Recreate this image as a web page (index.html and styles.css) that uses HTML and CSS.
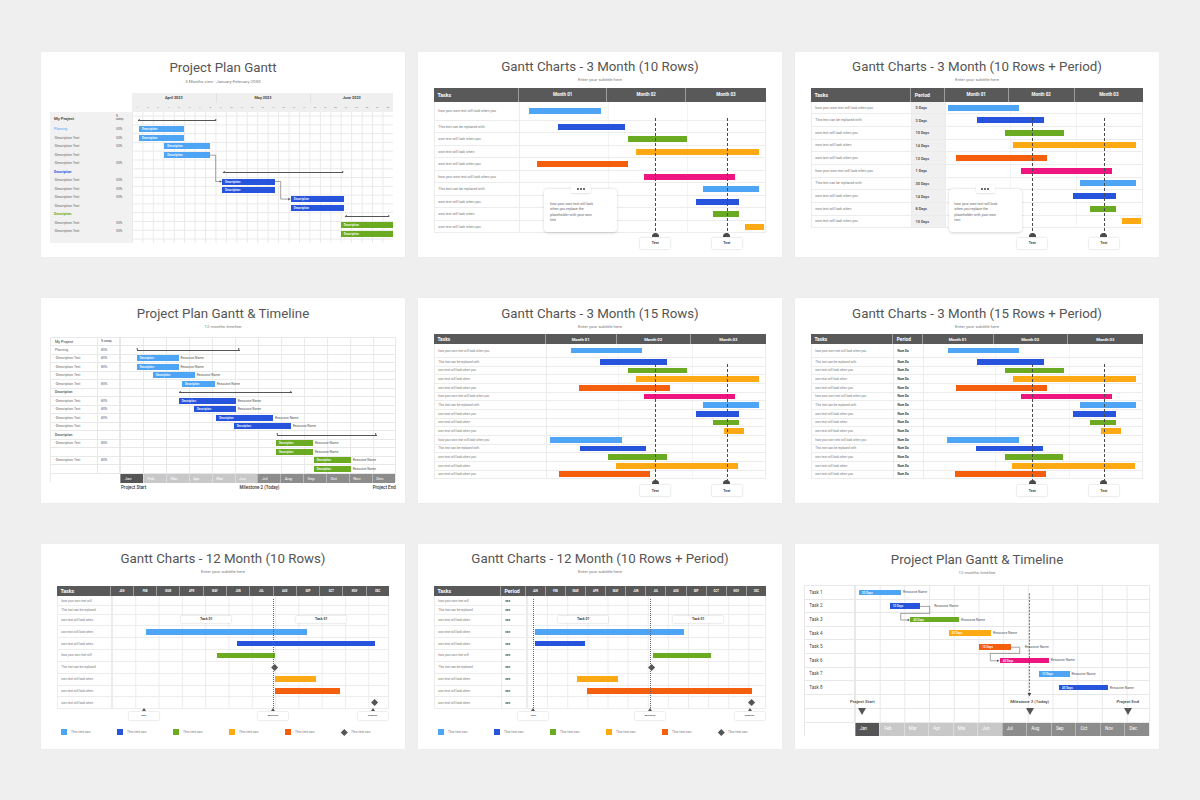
FILE: index.html
```html
<!DOCTYPE html>
<html lang="en">
<head>
<meta charset="utf-8">
<title>Gantt Chart Templates</title>
<link rel="stylesheet" href="styles.css">
</head>
<body>
<main class="sheet">

<!-- 1 -->
<section class="slide s1">
  <h1 class="title">Project Plan Gantt</h1>
  <p class="sub">3 Months view - January-February 20XX</p>
  <div class="pg">
    <div></div>
    <div class="pg-head">
      <div class="pg-months"><span>April 2023</span><span>May 2023</span><span>June 2023</span></div>
      <div class="pg-days"><span>1</span><span>2</span><span>3</span><span>4</span><span>5</span><span>6</span><span>7</span><span>8</span><span>9</span><span>10</span><span>11</span><span>12</span><span>13</span><span>14</span><span>15</span><span>16</span><span>17</span><span>18</span><span>19</span><span>20</span><span>21</span><span>22</span><span>23</span><span>24</span><span>25</span></div>
    </div>
    <div class="pg-left">
      <div class="pl-head"><b>My Project</b><small>%<br>comp.</small></div>
      <div class="pl-row"><span class="lb-t">Planning</span><span>50%</span></div>
      <div class="pl-row"><span>-Description Text</span><span>50%</span></div>
      <div class="pl-row"><span>-Description Text</span><span>50%</span></div>
      <div class="pl-row"><span>-Description Text</span><span></span></div>
      <div class="pl-row"><span>-Description Text</span><span>50%</span></div>
      <div class="pl-row"><span class="bl-t">Description</span><span></span></div>
      <div class="pl-row"><span>-Description Text</span><span>50%</span></div>
      <div class="pl-row"><span>-Description Text</span><span>50%</span></div>
      <div class="pl-row"><span>-Description Text</span><span>50%</span></div>
      <div class="pl-row"><span>-Description Text</span><span></span></div>
      <div class="pl-row"><span class="gr-t">Description</span><span></span></div>
      <div class="pl-row"><span>-Description Text</span><span>50%</span></div>
      <div class="pl-row"><span>-Description Text</span><span>50%</span></div>
    </div>
    <div class="pg-body">
      <div class="pb-row"><i class="span" style="margin-left:6px;width:78px"></i></div>
      <div class="pb-row"><i class="bar c1" style="margin-left:7px;width:45.3px">Description</i></div>
      <div class="pb-row"><i class="bar c1" style="margin-left:7px;width:45.3px">Description</i></div>
      <div class="pb-row"><i class="bar c1" style="margin-left:32.3px;width:45.4px">Description</i></div>
      <div class="pb-row"><i class="bar c1" style="margin-left:32.3px;width:45.4px">Description</i></div>
      <div class="pb-row"></div>
      <div class="pb-row"><i class="span" style="margin-left:91px;width:120px"></i></div>
      <div class="pb-row"><i class="bar c2" style="margin-left:90px;width:52.7px">Description</i></div>
      <div class="pb-row"><i class="bar c2" style="margin-left:90px;width:52.7px">Description</i></div>
      <div class="pb-row"><i class="bar c2" style="margin-left:158.7px;width:53.3px">Description</i></div>
      <div class="pb-row"><i class="bar c2" style="margin-left:158.7px;width:53.3px">Description</i></div>
      <div class="pb-row"><i class="span" style="margin-left:213px;width:44px"></i></div>
      <div class="pb-row"><i class="bar c3" style="margin-left:208.7px;width:52.3px">Description</i></div>
      <div class="pb-row"><i class="bar c3" style="margin-left:208.7px;width:52.3px">Description</i></div>
      <svg class="conn" width="261" height="131" viewBox="0 0 261 131">
        <polyline points="77.7,43.2 83.7,43.2 83.7,69.5 88.3,69.5" fill="none" stroke="#666" stroke-width="0.6"/>
        <polygon points="90,69.5 87.6,68.2 87.6,70.8" fill="#555"/>
        <polyline points="142.7,69.5 148.7,69.5 148.7,87.1 157,87.1" fill="none" stroke="#666" stroke-width="0.6"/>
        <polygon points="158.7,87.1 156.3,85.8 156.3,88.4" fill="#555"/>
      </svg>
    </div>
  </div>
</section>

<!-- 2 -->
<section class="slide s2">
  <h1 class="title">Gantt Charts - 3 Month (10 Rows)</h1>
  <p class="sub">Enter your subtitle here</p>
  <div class="tbl t2">
    <div class="thead"><span class="lh">Tasks</span><span>Month 01</span><span>Month 02</span><span>Month 03</span></div>
    <div class="trow first"><span>how your own text will look when you</span><div class="ch"><i class="bar c1" style="margin-left:9px;width:72px"></i></div></div>
    <div class="trow"><span>This text can be replaced with</span><div class="ch"><i class="bar c2" style="margin-left:38.3px;width:66.7px"></i></div></div>
    <div class="trow"><span>own text will look when you</span><div class="ch"><i class="bar c3" style="margin-left:108.3px;width:58.7px"></i></div></div>
    <div class="trow"><span>own text will look when</span><div class="ch"><i class="bar c4" style="margin-left:115.6px;width:123.1px"></i></div></div>
    <div class="trow"><span>own text will look when you</span><div class="ch"><i class="bar c5" style="margin-left:17.3px;width:91px"></i></div></div>
    <div class="trow"><span>how your own text will look when you</span><div class="ch"><i class="bar c6" style="margin-left:124.3px;width:91px"></i></div></div>
    <div class="trow"><span>This text can be replaced with</span><div class="ch"><i class="bar c1" style="margin-left:182.6px;width:56.1px"></i></div></div>
    <div class="trow"><span>own text will look when you</span><div class="ch"><i class="bar c2" style="margin-left:176.3px;width:43px"></i></div></div>
    <div class="trow"><span>own text will look when</span><div class="ch"><i class="bar c3" style="margin-left:192.7px;width:26.6px"></i></div></div>
    <div class="trow"><span>own text will look when you</span><div class="ch"><i class="bar c4" style="margin-left:224.7px;width:19.3px"></i></div></div>
    <div class="vl" style="left:221.3px;top:30px;height:116px"></div>
    <div class="vl" style="left:292.7px;top:30px;height:116px"></div>
    <div class="dome" style="left:217.6px;top:145.3px"></div>
    <div class="dome" style="left:289px;top:145.3px"></div>
    <div class="tag big" style="left:206.3px;top:150px">Text</div>
    <div class="tag big" style="left:277.7px;top:150px">Text</div>
    <div class="callout" style="left:110.3px;top:101.6px"><div class="dots"><i></i><i></i><i></i></div>how your own text will look<br>when you replace the<br>placeholder with your own<br>text</div>
  </div>
</section>

<!-- 3 -->
<section class="slide s3">
  <h1 class="title">Gantt Charts - 3 Month (10 Rows + Period)</h1>
  <p class="sub">Enter your subtitle here</p>
  <div class="tbl t3">
    <div class="thead"><span class="lh">Tasks</span><span class="lh">Period</span><span>Month 01</span><span>Month 02</span><span>Month 03</span></div>
    <div class="trow"><span>how your own text will look when you</span><span class="pd">5 Days</span><div class="ch"><i class="bar c1" style="margin-left:1.9px;width:71.7px"></i></div></div>
    <div class="trow"><span>This text can be replaced with</span><span class="pd">3 Days</span><div class="ch"><i class="bar c2" style="margin-left:31.3px;width:66.7px"></i></div></div>
    <div class="trow"><span>own text will look when you</span><span class="pd">10 Days</span><div class="ch"><i class="bar c3" style="margin-left:59.6px;width:58.7px"></i></div></div>
    <div class="trow"><span>own text will look when</span><span class="pd">14 Days</span><div class="ch"><i class="bar c4" style="margin-left:66.9px;width:123.1px"></i></div></div>
    <div class="trow"><span>own text will look when you</span><span class="pd">12 Days</span><div class="ch"><i class="bar c5" style="margin-left:10.3px;width:91px"></i></div></div>
    <div class="trow"><span>how your own text will look when you</span><span class="pd">1 Days</span><div class="ch"><i class="bar c6" style="margin-left:75.6px;width:91px"></i></div></div>
    <div class="trow"><span>This text can be replaced with</span><span class="pd">30 Days</span><div class="ch"><i class="bar c1" style="margin-left:133.9px;width:56.1px"></i></div></div>
    <div class="trow"><span>own text will look when you</span><span class="pd">14 Days</span><div class="ch"><i class="bar c2" style="margin-left:127.6px;width:43px"></i></div></div>
    <div class="trow"><span>own text will look when</span><span class="pd">8 Days</span><div class="ch"><i class="bar c3" style="margin-left:144px;width:26.6px"></i></div></div>
    <div class="trow"><span>own text will look when you</span><span class="pd">10 Days</span><div class="ch"><i class="bar c4" style="margin-left:176px;width:19.3px"></i></div></div>
    <div class="vl" style="left:221.3px;top:30px;height:116px"></div>
    <div class="vl" style="left:292.7px;top:30px;height:116px"></div>
    <div class="dome" style="left:217.6px;top:145.3px"></div>
    <div class="dome" style="left:289px;top:145.3px"></div>
    <div class="tag big" style="left:206.3px;top:150px">Text</div>
    <div class="tag big" style="left:277.7px;top:150px">Text</div>
    <div class="callout" style="left:137.6px;top:101.6px"><div class="dots"><i></i><i></i><i></i></div>how your own text will look<br>when you replace the<br>placeholder with your own<br>text</div>
  </div>
</section>

<!-- 4 -->
<section class="slide s4">
  <h1 class="title">Project Plan Gantt &amp; Timeline</h1>
  <p class="sub">12 months timeline</p>
  <div class="tl">
    <div class="tl-row tl-h"><span>My Project</span><span>% comp.</span><div class="tl-ch"></div></div>
    <div class="tl-row"><span class="lb-t">Planning</span><span>80%</span><div class="tl-ch"><i class="span" style="margin-left:16.7px;width:102.7px"></i></div></div>
    <div class="tl-row"><span>-Description Text</span><span>80%</span><div class="tl-ch"><i class="bar c1" style="margin-left:16.4px;width:42px">Description</i><em class="rn">Resource Name</em></div></div>
    <div class="tl-row"><span>-Description Text</span><span>80%</span><div class="tl-ch"><i class="bar c1" style="margin-left:16.4px;width:42px">Description</i><em class="rn">Resource Name</em></div></div>
    <div class="tl-row"><span>-Description Text</span><span></span><div class="tl-ch"><i class="bar c1" style="margin-left:32.7px;width:42px">Description</i><em class="rn">Resource Name</em></div></div>
    <div class="tl-row"><span>-Description Text</span><span>80%</span><div class="tl-ch"><i class="bar c1" style="margin-left:61.7px;width:33px">Description</i><em class="rn">Resource Name</em></div></div>
    <div class="tl-row"><span class="bl-t">Description</span><span></span><div class="tl-ch"><i class="span" style="margin-left:59px;width:112.4px"></i></div></div>
    <div class="tl-row"><span>-Description Text</span><span>80%</span><div class="tl-ch"><i class="bar c2" style="margin-left:58.4px;width:57.3px">Description</i><em class="rn">Resource Name</em></div></div>
    <div class="tl-row"><span>-Description Text</span><span>80%</span><div class="tl-ch"><i class="bar c2" style="margin-left:73.7px;width:42px">Description</i><em class="rn">Resource Name</em></div></div>
    <div class="tl-row"><span>-Description Text</span><span>80%</span><div class="tl-ch"><i class="bar c2" style="margin-left:96px;width:57px">Description</i><em class="rn">Resource Name</em></div></div>
    <div class="tl-row"><span>-Description Text</span><span></span><div class="tl-ch"><i class="bar c2" style="margin-left:113.4px;width:57.3px">Description</i><em class="rn">Resource Name</em></div></div>
    <div class="tl-row"><span class="gr-t">Description</span><span></span><div class="tl-ch"><i class="span" style="margin-left:156.4px;width:100.3px"></i></div></div>
    <div class="tl-row"><span>-Description Text</span><span>80%</span><div class="tl-ch"><i class="bar c3" style="margin-left:155.7px;width:37.3px">Description</i><em class="rn">Resource Name</em></div></div>
    <div class="tl-row"><span></span><span></span><div class="tl-ch"><i class="bar c3" style="margin-left:155.7px;width:37.3px">Description</i><em class="rn">Resource Name</em></div></div>
    <div class="tl-row"><span>-Description Text</span><span>80%</span><div class="tl-ch"><i class="bar c3" style="margin-left:193.4px;width:37.3px">Description</i><em class="rn">Resource Name</em></div></div>
    <div class="tl-row"><span></span><span></span><div class="tl-ch"><i class="bar c3" style="margin-left:193.4px;width:37.3px">Description</i><em class="rn">Resource Name</em></div></div>
    <div class="tl-months"><span></span><span class="mj">Jan</span><span class="ml">Feb</span><span class="ml">Mar</span><span class="ml">Apr</span><span class="ml">Mai</span><span class="ml">Jun</span><span class="md">Jul</span><span class="md">Aug</span><span class="md">Sep</span><span class="md">Oct</span><span class="md">Nov</span><span class="md">Dec</span></div>
  </div>
  <div class="tl-foot"><b>Project Start</b><b>Milestone 2 (Today)</b><b>Project End</b></div>
</section>

<!-- 5 -->
<section class="slide s5">
  <h1 class="title">Gantt Charts - 3 Month (15 Rows)</h1>
  <p class="sub">Enter your subtitle here</p>
  <div class="tbl t5">
    <div class="thead"><span class="lh">Tasks</span><span>Month 01</span><span>Month 02</span><span>Month 03</span></div>
    <div class="trow first"><span>how your own text will look when you</span><div class="ch"><i class="bar c1" style="margin-left:23.9px;width:71.7px"></i></div></div>
    <div class="trow"><span>This text can be replaced with</span><div class="ch"><i class="bar c2" style="margin-left:53.3px;width:66.7px"></i></div></div>
    <div class="trow"><span>own text will look when you</span><div class="ch"><i class="bar c3" style="margin-left:81.6px;width:58.7px"></i></div></div>
    <div class="trow"><span>own text will look when</span><div class="ch"><i class="bar c4" style="margin-left:88.9px;width:123.1px"></i></div></div>
    <div class="trow"><span>own text will look when you</span><div class="ch"><i class="bar c5" style="margin-left:32.3px;width:91px"></i></div></div>
    <div class="trow"><span>how your own text will look when you</span><div class="ch"><i class="bar c6" style="margin-left:97.6px;width:91px"></i></div></div>
    <div class="trow"><span>This text can be replaced with</span><div class="ch"><i class="bar c1" style="margin-left:155.9px;width:56.1px"></i></div></div>
    <div class="trow"><span>own text will look when you</span><div class="ch"><i class="bar c2" style="margin-left:149.6px;width:43px"></i></div></div>
    <div class="trow"><span>own text will look when</span><div class="ch"><i class="bar c3" style="margin-left:166px;width:26.6px"></i></div></div>
    <div class="trow"><span>own text will look when you</span><div class="ch"><i class="bar c4" style="margin-left:177.6px;width:19.4px"></i></div></div>
    <div class="trow"><span>how your own text will look when you</span><div class="ch"><i class="bar c1" style="margin-left:3.6px;width:71.7px"></i></div></div>
    <div class="trow"><span>This text can be replaced with</span><div class="ch"><i class="bar c2" style="margin-left:33px;width:66.6px"></i></div></div>
    <div class="trow"><span>own text will look when you</span><div class="ch"><i class="bar c3" style="margin-left:61.6px;width:58.7px"></i></div></div>
    <div class="trow"><span>own text will look when</span><div class="ch"><i class="bar c4" style="margin-left:68.9px;width:122.7px"></i></div></div>
    <div class="trow"><span>own text will look when you</span><div class="ch"><i class="bar c5" style="margin-left:11.9px;width:91.1px"></i></div></div>
    <div class="vl" style="left:221.3px;top:30px;height:116.5px"></div>
    <div class="vl" style="left:292.7px;top:30px;height:116.5px"></div>
    <div class="dome" style="left:217.6px;top:146px"></div>
    <div class="dome" style="left:289px;top:146px"></div>
    <div class="tag big" style="left:206.3px;top:150.7px">Text</div>
    <div class="tag big" style="left:277.7px;top:150.7px">Text</div>
  </div>
</section>

<!-- 6 -->
<section class="slide s6">
  <h1 class="title">Gantt Charts - 3 Month (15 Rows + Period)</h1>
  <p class="sub">Enter your subtitle here</p>
  <div class="tbl t6">
    <div class="thead"><span class="lh">Tasks</span><span class="lh">Period</span><span>Month 01</span><span>Month 02</span><span>Month 03</span></div>
    <div class="trow first"><span>how your own text will look when you</span><span class="pd">Num Da</span><div class="ch"><i class="bar c1" style="margin-left:23.9px;width:71.7px"></i></div></div>
    <div class="trow"><span>This text can be replaced with</span><span class="pd">Num Da</span><div class="ch"><i class="bar c2" style="margin-left:53.3px;width:66.7px"></i></div></div>
    <div class="trow"><span>own text will look when you</span><span class="pd">Num Da</span><div class="ch"><i class="bar c3" style="margin-left:81.6px;width:58.7px"></i></div></div>
    <div class="trow"><span>own text will look when</span><span class="pd">Num Da</span><div class="ch"><i class="bar c4" style="margin-left:88.9px;width:123.1px"></i></div></div>
    <div class="trow"><span>own text will look when you</span><span class="pd">Num Da</span><div class="ch"><i class="bar c5" style="margin-left:32.3px;width:91px"></i></div></div>
    <div class="trow"><span>how your own text will look when you</span><span class="pd">Num Da</span><div class="ch"><i class="bar c6" style="margin-left:97.6px;width:91px"></i></div></div>
    <div class="trow"><span>This text can be replaced with</span><span class="pd">Num Da</span><div class="ch"><i class="bar c1" style="margin-left:155.9px;width:56.1px"></i></div></div>
    <div class="trow"><span>own text will look when you</span><span class="pd">Num Da</span><div class="ch"><i class="bar c2" style="margin-left:149.6px;width:43px"></i></div></div>
    <div class="trow"><span>own text will look when</span><span class="pd">Num Da</span><div class="ch"><i class="bar c3" style="margin-left:166px;width:26.6px"></i></div></div>
    <div class="trow"><span>own text will look when you</span><span class="pd">Num Da</span><div class="ch"><i class="bar c4" style="margin-left:177.6px;width:19.4px"></i></div></div>
    <div class="trow"><span>how your own text will look when you</span><span class="pd">Num Da</span><div class="ch"><i class="bar c1" style="margin-left:23.3px;width:71.7px"></i></div></div>
    <div class="trow"><span>This text can be replaced with</span><span class="pd">Num Da</span><div class="ch"><i class="bar c2" style="margin-left:52.6px;width:66.4px"></i></div></div>
    <div class="trow"><span>own text will look when you</span><span class="pd">Num Da</span><div class="ch"><i class="bar c3" style="margin-left:80.9px;width:58.7px"></i></div></div>
    <div class="trow"><span>own text will look when</span><span class="pd">Num Da</span><div class="ch"><i class="bar c4" style="margin-left:88.3px;width:122.7px"></i></div></div>
    <div class="trow"><span>own text will look when you</span><span class="pd">Num Da</span><div class="ch"><i class="bar c5" style="margin-left:31.6px;width:90.7px"></i></div></div>
    <div class="vl" style="left:221.3px;top:30px;height:116.5px"></div>
    <div class="vl" style="left:292.7px;top:30px;height:116.5px"></div>
    <div class="dome" style="left:217.6px;top:146px"></div>
    <div class="dome" style="left:289px;top:146px"></div>
    <div class="tag big" style="left:206.3px;top:150.7px">Text</div>
    <div class="tag big" style="left:277.7px;top:150.7px">Text</div>
  </div>
</section>

<!-- 7 -->
<section class="slide s7">
  <h1 class="title">Gantt Charts - 12 Month (10 Rows)</h1>
  <p class="sub">Enter your subtitle here</p>
  <div class="tbl m12 t7">
    <div class="thead"><span class="lh">Tasks</span><span>JAN</span><span>FEB</span><span>MAR</span><span>APR</span><span>MAY</span><span>JUN</span><span>JUL</span><span>AUG</span><span>SEP</span><span>OCT</span><span>NOV</span><span>DEC</span></div>
    <div class="trow r1"><span>how your own text will</span><div class="ch"></div></div>
    <div class="trow r2"><span>This text can be replaced</span><div class="ch"></div></div>
    <div class="trow r3"><span>own text will look when</span><div class="ch"></div></div>
    <div class="trow"><span>own text will look when</span><div class="ch"><i class="bar c1" style="margin-left:34px;width:161.7px"></i></div></div>
    <div class="trow"><span>own text will look when</span><div class="ch"><i class="bar c2" style="margin-left:125.7px;width:137.7px"></i></div></div>
    <div class="trow"><span>how your own text will</span><div class="ch"><i class="bar c3" style="margin-left:105px;width:58.4px"></i></div></div>
    <div class="trow"><span>This text can be replaced</span><div class="ch"><i class="dia" style="margin-left:160.9px"></i></div></div>
    <div class="trow"><span>own text will look when</span><div class="ch"><i class="bar c4" style="margin-left:163.4px;width:41.3px"></i></div></div>
    <div class="trow"><span>own text will look when</span><div class="ch"><i class="bar c5" style="margin-left:163.4px;width:65.3px"></i></div></div>
    <div class="trow"><span>own text will look when</span><div class="ch"><i class="dia" style="margin-left:260.5px"></i></div></div>
    <div class="tag task" style="left:124.3px;top:29.4px">Task 01</div>
    <div class="tag task" style="left:239.3px;top:29.4px">Task 01</div>
    <div class="vd" style="left:86.6px;top:12.4px;height:109.3px"></div>
    <div class="vd" style="left:216px;top:12.4px;height:109.3px"></div>
    <div class="vd" style="left:315.6px;top:12.4px;height:109.3px"></div>
    <div class="tri-up" style="left:84.6px;top:121.7px"></div>
    <div class="tri-up" style="left:214px;top:121.7px"></div>
    <div class="tri-up" style="left:313.6px;top:121.7px"></div>
    <div class="tag sm" style="left:71.6px;top:125.7px">Start</div>
    <div class="tag sm" style="left:201px;top:125.7px">Milestone</div>
    <div class="tag sm" style="left:300.6px;top:125.7px">Deadline</div>
  </div>
  <div class="legend">
    <span><i class="c1"></i>This text can</span>
    <span><i class="c2"></i>This text can</span>
    <span><i class="c3"></i>This text can</span>
    <span><i class="c4"></i>This text can</span>
    <span><i class="c5"></i>This text can</span>
    <span><i class="dia"></i>This text can</span>
  </div>
</section>

<!-- 8 -->
<section class="slide s8">
  <h1 class="title">Gantt Charts - 12 Month (10 Rows + Period)</h1>
  <p class="sub">Enter your subtitle here</p>
  <div class="tbl m12 t8">
    <div class="thead"><span class="lh">Tasks</span><span class="lh">Period</span><span>JAN</span><span>FEB</span><span>MAR</span><span>APR</span><span>MAY</span><span>JUN</span><span>JUL</span><span>AUG</span><span>SEP</span><span>OCT</span><span>NOV</span><span>DEC</span></div>
    <div class="trow r1"><span>how your own text will</span><span class="pd">xxx</span><div class="ch"></div></div>
    <div class="trow r2"><span>This text can be replaced</span><span class="pd">xxx</span><div class="ch"></div></div>
    <div class="trow r3"><span>own text will look when</span><span class="pd">xxx</span><div class="ch"></div></div>
    <div class="trow"><span>own text will look when</span><span class="pd">xxx</span><div class="ch"><i class="bar c1" style="margin-left:8.6px;width:149px"></i></div></div>
    <div class="trow"><span>own text will look when</span><span class="pd">xxx</span><div class="ch"><i class="bar c2" style="margin-left:8.6px;width:49.4px"></i></div></div>
    <div class="trow"><span>how your own text will</span><span class="pd">xxx</span><div class="ch"><i class="bar c3" style="margin-left:126px;width:58.6px"></i></div></div>
    <div class="trow"><span>This text can be replaced</span><span class="pd">xxx</span><div class="ch"><i class="dia" style="margin-left:122.8px"></i></div></div>
    <div class="trow"><span>own text will look when</span><span class="pd">xxx</span><div class="ch"><i class="bar c4" style="margin-left:50.3px;width:41px"></i></div></div>
    <div class="trow"><span>own text will look when</span><span class="pd">xxx</span><div class="ch"><i class="bar c5" style="margin-left:60.3px;width:164.7px"></i></div></div>
    <div class="trow"><span>own text will look when</span><span class="pd">xxx</span><div class="ch"><i class="dia" style="margin-left:222.5px"></i></div></div>
    <div class="tag task" style="left:124.3px;top:29.4px">Task 01</div>
    <div class="tag task" style="left:239.3px;top:29.4px">Task 01</div>
    <div class="vd" style="left:99.3px;top:12.4px;height:109.3px"></div>
    <div class="vd" style="left:216px;top:12.4px;height:109.3px"></div>
    <div class="vd" style="left:315.7px;top:12.4px;height:109.3px"></div>
    <div class="tri-up" style="left:97.3px;top:121.7px"></div>
    <div class="tri-up" style="left:214px;top:121.7px"></div>
    <div class="tri-up" style="left:313.7px;top:121.7px"></div>
    <div class="tag sm" style="left:84.3px;top:125.7px">Start</div>
    <div class="tag sm" style="left:201px;top:125.7px">Milestone</div>
    <div class="tag sm" style="left:300.7px;top:125.7px">Deadline</div>
  </div>
  <div class="legend">
    <span><i class="c1"></i>This text can</span>
    <span><i class="c2"></i>This text can</span>
    <span><i class="c3"></i>This text can</span>
    <span><i class="c4"></i>This text can</span>
    <span><i class="c5"></i>This text can</span>
    <span><i class="dia"></i>This text can</span>
  </div>
</section>

<!-- 9 -->
<section class="slide s9">
  <h1 class="title">Project Plan Gantt &amp; Timeline</h1>
  <p class="sub">12 months timeline</p>
  <div class="tk">
    <div class="tk-row"><span>Task 1</span><div class="tk-ch"><i class="bar c1" style="margin-left:4.3px;width:42.3px">30 Days</i><em class="rn">Resource Name</em></div></div>
    <div class="tk-row"><span>Task 2</span><div class="tk-ch"><i class="bar c2" style="margin-left:34.9px;width:30.7px">10 Days</i><em class="rn far">Resource Name</em></div></div>
    <div class="tk-row"><span>Task 3</span><div class="tk-ch"><i class="bar c3" style="margin-left:55.6px;width:49px">40 Days</i><em class="rn">Resource Name</em></div></div>
    <div class="tk-row"><span>Task 4</span><div class="tk-ch"><i class="bar c4" style="margin-left:93.9px;width:42.7px">30 Days</i><em class="rn">Resource Name</em></div></div>
    <div class="tk-row"><span>Task 5</span><div class="tk-ch"><i class="bar c5" style="margin-left:124.6px;width:31.4px">10 Days</i><em class="rn far">Resource Name</em></div></div>
    <div class="tk-row"><span>Task 6</span><div class="tk-ch"><i class="bar c6" style="margin-left:145px;width:49.3px">40 Days</i><em class="rn">Resource Name</em></div></div>
    <div class="tk-row"><span>Task 7</span><div class="tk-ch"><i class="bar c1" style="margin-left:184.3px;width:30.7px">10 Days</i><em class="rn">Resource Name</em></div></div>
    <div class="tk-row"><span>Task 8</span><div class="tk-ch"><i class="bar c2" style="margin-left:204.3px;width:49px">40 Days</i><em class="rn">Resource Name</em></div></div>
    <div class="tk-row ms"><span></span><div class="tk-ch"></div></div>
    <div class="tk-row ms"><span></span><div class="tk-ch"></div></div>
    <div class="tk-months"><span></span><span class="mj">Jan</span><span class="ml">Feb</span><span class="ml">Mar</span><span class="ml">Apr</span><span class="ml">Mai</span><span class="ml">Jun</span><span class="md">Jul</span><span class="md">Aug</span><span class="md">Sep</span><span class="md">Oct</span><span class="md">Nov</span><span class="md">Dec</span></div>
    <svg class="conn" width="346" height="150" viewBox="0 0 346 150">
      <polyline points="115,20.4 124.7,20.4 124.7,27.4 95.7,27.4 95.7,34 103.3,34" fill="none" stroke="#666" stroke-width="0.6"/>
      <polygon points="105,34 102.6,32.7 102.6,35.3" fill="#555"/>
      <polyline points="205.4,61.2 214.7,61.2 214.7,67.4 185.3,67.4 185.3,74.8 192.7,74.8" fill="none" stroke="#666" stroke-width="0.6"/>
      <polygon points="194.4,74.8 192,73.5 192,76.1" fill="#555"/>
      <line x1="224.4" y1="7.4" x2="224.4" y2="107.5" stroke="#444" stroke-width="0.8" stroke-dasharray="2 1.3"/>
      <polygon points="224.4,110.5 222.6,107 226.2,107" fill="#444"/>
    </svg>
    <b class="ms-l" style="left:57px;top:112.7px">Project Start</b>
    <b class="ms-l" style="left:224.4px;top:112.7px">Milestone 2 (Today)</b>
    <b class="ms-l" style="left:322.4px;top:112.7px">Project End</b>
    <i class="tri-dn" style="left:57px;top:122.4px"></i>
    <i class="tri-dn" style="left:224.4px;top:122.4px"></i>
    <i class="tri-dn" style="left:322.4px;top:122.4px"></i>
  </div>
</section>

</main>
</body>
</html>
```

FILE: styles.css
```css
*{box-sizing:border-box;margin:0;padding:0}
html,body{width:1200px;height:800px}
body{background:#efefef;font-family:Roboto,"Liberation Sans",Arial,sans-serif;color:#555;overflow:hidden}

.sheet{display:grid;grid-template-columns:repeat(3,364px);grid-template-rows:repeat(3,205px);column-gap:13px;row-gap:41px;padding:52px 0 0 41px}
.slide{position:relative;background:#fff;overflow:hidden;box-shadow:0 0 1px rgba(0,0,0,.06)}
.title{font-size:13.3px;line-height:16px;font-weight:400;color:#555;text-align:center;white-space:nowrap}
.sub{font-size:4.3px;line-height:6px;color:#7a7a7a;text-align:center;margin-top:2.6px;white-space:nowrap}
.s1{padding-top:8px}
.s2,.s3,.s7,.s8{padding-top:6.7px}
.s4,.s5,.s6,.s9{padding-top:7.7px}
.s1 .sub,.s9 .sub{margin-top:2.8px}

/* colours */
.c1{background:#4ea5f6}
.c2{background:#2654dd}
.c3{background:#6aab22}
.c4{background:#fda914}
.c5{background:#f55e0d}
.c6{background:#ef1580}
.lb-t{color:#4ea5f6}
.bl-t{color:#2654dd;font-weight:700}
.gr-t{color:#6aab22;font-weight:700}

/* shared bar pieces */
.bar{display:block;flex:none;height:6px;font-style:normal;font-size:3px;font-weight:500;line-height:6px;color:#fff;padding-left:3px;white-space:nowrap;overflow:hidden}
.span{display:block;flex:none;height:.7px;background:#555;position:relative}
.span::before,.span::after{content:"";position:absolute;top:-1.15px;border-top:1.5px solid transparent;border-bottom:1.5px solid transparent}
.span::before{left:-.5px;border-right:2.4px solid #555}
.span::after{right:-.5px;border-left:2.4px solid #555}
.rn{font-style:normal;font-size:3.3px;color:#555;margin-left:1.8px;white-space:nowrap;flex:none}
.rn.far{margin-left:14px}
.dia{display:block;flex:none;width:5.2px;height:5.2px;background:#555;transform:rotate(45deg)}
.conn{position:absolute;left:0;top:0;overflow:visible;pointer-events:none}

/* slide 1 */
.pg{display:grid;grid-template-columns:82px 261px;grid-template-rows:19px 131px;margin:8.3px 0 0 9px}
.pg-head{background:#efefef}
.pg-months{display:grid;grid-template-columns:83.5px 94px 83.5px;height:9.5px}
.pg-months span{font-size:3.8px;font-weight:700;color:#444;text-align:center;line-height:9.5px;border-left:.6px solid #e2e2e2}
.pg-months span:first-child{border-left:0}
.pg-days{display:grid;grid-template-columns:repeat(25,1fr);height:9.5px}
.pg-days span{font-size:2.2px;color:#666;text-align:center;line-height:9.5px}
.pg-left{background:#f1f1f1;color:#666}
.pl-head,.pl-row{display:grid;grid-template-columns:62px 20px;padding-left:4px;align-items:center;white-space:nowrap}
.pl-head{height:12.75px}
.pl-head b{font-size:4.2px;font-weight:500;color:#333}
.pl-head small{font-size:2.8px;line-height:3.2px;color:#444}
.pl-row{height:8.5px;font-size:3.4px}
.pg-body{position:relative;padding-top:3.6px;background-image:linear-gradient(90deg,#e9e9e9 .6px,transparent .6px),linear-gradient(#e9e9e9 .6px,transparent .6px);background-size:10.44px 100%,100% 8.79px;background-position:0 0,0 3.6px}
.pb-row{height:8.79px;display:flex;align-items:center}

/* 3-month & 12-month tables */
.tbl{position:relative;margin:4.4px 16px 0}
.s5 .tbl,.s6 .tbl{margin-top:4px}
.s7 .tbl,.s8 .tbl{margin-top:11px}
.thead{display:grid;background:#595959;color:#fff;font-weight:700}
.thead span{display:flex;align-items:center;justify-content:center;border-left:.7px solid #9c9c9c;font-size:4.5px;white-space:nowrap}
.thead span:first-child{border-left:0}
.thead .lh{justify-content:flex-start;padding-left:3.5px;font-size:5.2px}
.trow{display:grid;border-bottom:.6px solid #ececec;border-left:.6px solid #ececec;border-right:.6px solid #ececec}
.trow > span{display:flex;align-items:center;padding-left:3.3px;font-size:3.5px;color:#777;white-space:nowrap;overflow:hidden}
.trow > .pd{border-left:.6px solid #ececec;font-weight:700;color:#555}
.ch{display:flex;align-items:center;border-left:.6px solid #ececec}

.t2 .thead{grid-template-columns:84px 88.3px 78.7px 1fr;height:14px}
.t2 .trow{grid-template-columns:84px 1fr;height:12.5px}
.t2 .trow.first{height:19.3px}
.t2 .ch{background:linear-gradient(#ececec,#ececec) 88.3px 0/.6px 100% no-repeat,linear-gradient(#ececec,#ececec) 167px 0/.6px 100% no-repeat}

.t3 .thead{grid-template-columns:99.3px 33.4px 64px 66px 1fr;height:14px}
.t3 .trow{grid-template-columns:99.3px 33.4px 1fr;height:12.66px}
.t3 .pd{background:#f0f0f0;font-size:3.8px}
.t3 .ch{background:linear-gradient(#ececec,#ececec) 64px 0/.6px 100% no-repeat,linear-gradient(#ececec,#ececec) 130px 0/.6px 100% no-repeat}

.t5 .thead{grid-template-columns:110.7px 71px 74px 1fr;height:10px}
.t5 .trow{grid-template-columns:110.7px 1fr;height:8.67px}
.t6 .thead{grid-template-columns:81.3px 29.4px 71px 74px 1fr;height:10px}
.t6 .trow{grid-template-columns:81.3px 29.4px 1fr;height:8.67px}
.t5 .trow.first,.t6 .trow.first{height:13.7px}
.t5 .thead span,.t6 .thead span{font-size:4.2px}
.t5 .thead .lh,.t6 .thead .lh{font-size:4.8px}
.t5 .trow > span,.t6 .trow > span{font-size:3.1px}
.t5 .bar,.t6 .bar{height:5.7px}
.t6 .pd{font-size:2.9px;color:#333}
.t5 .ch,.t6 .ch{background:linear-gradient(#ececec,#ececec) 71px 0/.6px 100% no-repeat,linear-gradient(#ececec,#ececec) 145px 0/.6px 100% no-repeat}

.m12 .thead{height:10px}
.m12 .thead span{font-size:2.7px}
.m12 .thead .lh{font-size:5.2px}
.m12 .trow{height:11.86px}
.m12 .trow.r1{height:10px}
.m12 .trow.r2{height:9px}
.m12 .trow.r3{height:11px}
.m12 .trow > span{font-size:3.1px}
.m12 .pd{font-size:3.4px;color:#444}
.m12 .bar{height:5.7px}
.t7 .thead{grid-template-columns:52.6px repeat(12,1fr)}
.t7 .trow{grid-template-columns:52.6px 1fr}
.t7 .ch{background:linear-gradient(90deg,#ececec .6px,transparent .6px) 0 0/23.3px 100%}
.t8 .thead{grid-template-columns:66px 24.7px repeat(12,1fr)}
.t8 .trow{grid-template-columns:66px 24.7px 1fr}
.t8 .ch{background:linear-gradient(90deg,#ececec .6px,transparent .6px) 0 0/20.13px 100%}

/* overlays on tables */
.vl{position:absolute;width:1px;background:repeating-linear-gradient(#4a4a4a 0 3px,transparent 3px 5px)}
.vd{position:absolute;width:.7px;background:repeating-linear-gradient(#666 0 1px,transparent 1px 2px)}
.dome{position:absolute;width:7.4px;height:3.7px;background:#4a4a4a;border-radius:3.7px 3.7px 0 0}
.tag{position:absolute;width:30px;background:#fff;box-shadow:0 .4px 1.8px rgba(0,0,0,.22);display:flex;align-items:center;justify-content:center;font-weight:700;color:#444;white-space:nowrap}
.tag.big{height:11.3px;font-size:3.6px}
.tag.sm{height:8px;font-size:2.4px}
.tag.task{width:50px;height:7.6px;font-size:3.6px}
.tri-up{position:absolute;width:0;height:0;border-left:2px solid transparent;border-right:2px solid transparent;border-bottom:3.6px solid #555}
.callout{position:absolute;width:73px;height:42.7px;background:#fff;border-radius:4px;box-shadow:0 .5px 3px rgba(0,0,0,.18);padding:12.4px 5.7px 0;font-size:3.6px;line-height:5.5px;color:#666;white-space:nowrap}
.callout .dots{position:absolute;left:27px;top:-4.3px;width:19.4px;height:8.3px;background:#fff;border-radius:1.5px;box-shadow:0 .4px 1.5px rgba(0,0,0,.18);display:flex;gap:1.2px;justify-content:center;align-items:center}
.callout .dots i{width:1.8px;height:1.8px;border-radius:50%;background:#444}

.legend{display:flex;padding-left:20px;margin-top:19.7px;height:6px;align-items:center}
.legend span{width:56px;display:flex;align-items:center;gap:4px;font-size:3.4px;color:#777;white-space:nowrap}
.legend i{width:6px;height:6px;flex:none}
.legend i.dia{width:4.6px;height:4.6px;margin:0 .7px}

/* slide 4 */
.tl{margin:6.4px 0 0 9px;width:345.7px;border-left:.6px solid #e8e8e8;border-right:.6px solid #e8e8e8}
.tl-row{display:grid;grid-template-columns:46.7px 22.6px 1fr;height:8.5px;border-top:.6px solid #e8e8e8}
.tl-row > span{display:flex;align-items:center;padding-left:4px;font-size:3.4px;color:#666;white-space:nowrap;border-right:.6px solid #e8e8e8}
.tl-row > span + span{padding-left:3.3px}
.tl-h > span{color:#333;font-size:3.8px}
.tl-h > span + span{font-size:3px}
.tl-ch{display:flex;align-items:center;background:linear-gradient(90deg,#e8e8e8 .6px,transparent .6px) 0 0/23.03px 100%}
.tl .bar{font-size:2.8px}
.tl-months{display:grid;grid-template-columns:69.3px repeat(12,1fr);height:9px;border-top:.6px solid #e8e8e8}
.tl-months span,.tk-months span{font-size:4.2px;color:#fff;line-height:9px;padding-left:3.4px;border-left:.5px solid rgba(255,255,255,.35)}
.tl-months span:first-child,.tk-months span:first-child{border-left:0}
.mj{background:#555}
.ml{background:#c8c8c8}
.md{background:#8c8c8c}
.tl-foot{display:flex;justify-content:space-between;margin:3px 0 0 80px;width:274.7px;font-size:4.5px;color:#333;line-height:6px;white-space:nowrap}
.tl-foot b{font-weight:500}

/* slide 9 */
.tk{position:relative;margin:8.6px 0 0 9.3px;width:345.7px;border-top:.6px solid #e8e8e8;border-left:.6px solid #e8e8e8;border-right:.6px solid #e8e8e8}
.tk-row{display:grid;grid-template-columns:49.4px 1fr;height:13.6px;border-bottom:.6px solid #e8e8e8}
.tk-row.ms{height:14px}
.tk-row > span{display:flex;align-items:center;padding-left:4px;font-size:4.5px;color:#444;border-right:.6px solid #e8e8e8;white-space:nowrap}
.tk-ch{display:flex;align-items:center;background:linear-gradient(90deg,#e8e8e8 .6px,transparent .6px) 0 0/24.69px 100%}
.tk .bar{height:5.7px;font-size:3px}
.tk .rn{font-size:3.4px}
.tk-months{display:grid;grid-template-columns:49.4px repeat(12,1fr);height:12.7px}
.tk-months span{line-height:12.7px;font-size:4.5px;padding-left:4px}
.ms-l{position:absolute;font-size:4.4px;font-weight:500;line-height:6px;color:#444;transform:translateX(-50%);white-space:nowrap}
.tri-dn{position:absolute;width:0;height:0;margin-left:-4px;border-left:4px solid transparent;border-right:4px solid transparent;border-top:7.6px solid #555}
```
